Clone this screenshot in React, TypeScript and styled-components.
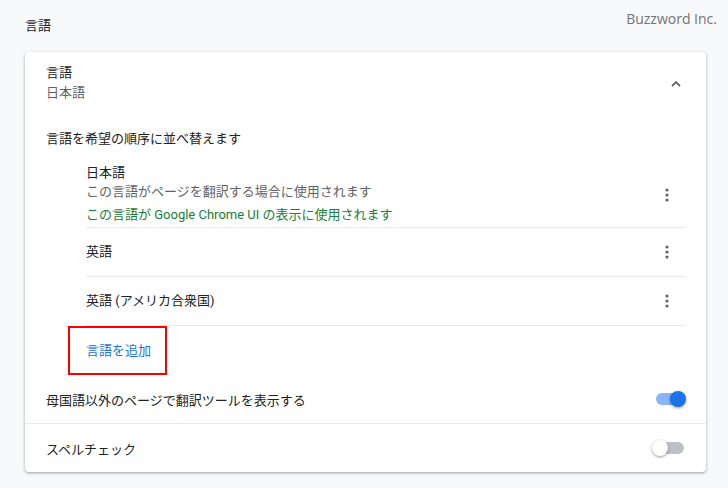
import React, {FC} from 'react';
import styled, {createGlobalStyle} from 'styled-components';

const GlobalStyle = createGlobalStyle`
  body {
    margin: 0;
    background: #f8f9fa;
    font-family: Roboto, "Noto Sans CJK JP", sans-serif;
    color: #202124;
    font-size: 13px;
  }
`

type Lang = {
    name: string
    lines?: { text: string, green?: boolean }[]
}

const languages: Lang[] = [
    {
        name: '日本語',
        lines: [
            {text: 'この言語がページを翻訳する場合に使用されます'},
            {text: 'この言語が Google Chrome UI の表示に使用されます', green: true},
        ]
    },
    {name: '英語'},
    {name: '英語 (アメリカ合衆国)'},
]

const Dots: FC = () => (
    <MenuButton>
        <svg width="4" height="14" viewBox="0 0 4 14">
            <circle cx="2" cy="2" r="1.6" fill="#5f6368"/>
            <circle cx="2" cy="7" r="1.6" fill="#5f6368"/>
            <circle cx="2" cy="12" r="1.6" fill="#5f6368"/>
        </svg>
    </MenuButton>
)

const App: FC = () => {
    return (
        <Page>
            <GlobalStyle/>
            <TopBar>
                <PageTitle>言語</PageTitle>
                <Brand>Buzzword Inc.</Brand>
            </TopBar>
            <Card>
                <CardHeader>
                    <div>
                        <HeaderTitle>言語</HeaderTitle>
                        <HeaderSub>日本語</HeaderSub>
                    </div>
                    <Chevron>
                        <svg width="10" height="6" viewBox="0 0 10 6">
                            <path d="M1 5 L5 1.2 L9 5" fill="none" stroke="#5f6368" strokeWidth="1.8"/>
                        </svg>
                    </Chevron>
                </CardHeader>
                <SectionLabel>言語を希望の順序に並べ替えます</SectionLabel>
                <LangList>
                    {languages.map((lang) => (
                        <LangRow key={lang.name} $tall={!!lang.lines}>
                            <div>
                                <LangName>{lang.name}</LangName>
                                {lang.lines && lang.lines.map((l) => (
                                    <LangNote key={l.text} $green={l.green}>{l.text}</LangNote>
                                ))}
                            </div>
                            <Dots/>
                        </LangRow>
                    ))}
                    <AddRow>
                        <Highlight>
                            <AddLink>言語を追加</AddLink>
                        </Highlight>
                    </AddRow>
                </LangList>
                <SettingRow>
                    <span>母国語以外のページで翻訳ツールを表示する</span>
                    <Toggle $on={true}><Knob $on={true}/></Toggle>
                </SettingRow>
                <SettingRow $border>
                    <span>スペルチェック</span>
                    <Toggle $on={false}><Knob $on={false}/></Toggle>
                </SettingRow>
            </Card>
        </Page>
    );
};

export default App;


const Page = styled.div`
  width: 728px;
  height: 488px;
  padding: 0 22px 0 25px;
  box-sizing: border-box;
`
const TopBar = styled.div`
  display: flex;
  justify-content: space-between;
  height: 52px;
`
const PageTitle = styled.h1`
  margin: 0;
  padding-top: 16px;
  font-size: 13px;
  font-weight: 400;
  line-height: 20px;
`
const Brand = styled.div`
  padding-top: 8px;
  margin-right: -11px;
  font-family: "Open Sans", sans-serif;
  font-size: 14px;
  line-height: 22px;
  color: #737373;
`
const Card = styled.div`
  background: #fff;
  border-radius: 4px;
  box-shadow: 0 1px 2px rgba(60, 64, 67, 0.3), 0 1px 3px 1px rgba(60, 64, 67, 0.15);
  overflow: hidden;
`
const CardHeader = styled.div`
  display: flex;
  justify-content: space-between;
  align-items: flex-start;
  padding: 11px 20px 0 21px;
  height: 65px;
  box-sizing: border-box;
`
const HeaderTitle = styled.div`
  line-height: 20px;
`
const HeaderSub = styled.div`
  line-height: 20px;
  color: #5f6368;
`
const Chevron = styled.div`
  width: 20px;
  display: flex;
  justify-content: center;
  margin-top: 18px;
`
const SectionLabel = styled.div`
  padding: 12px 21px 13px;
  line-height: 20px;
`
const LangList = styled.div`
  padding: 0 20px 0 61px;
`
const LangRow = styled.div<{ $tall?: boolean }>`
  display: flex;
  justify-content: space-between;
  align-items: center;
  min-height: ${p => p.$tall ? '66px' : '49px'};
  border-bottom: 1px solid #e8eaed;
  padding: ${p => p.$tall ? '1px 0 0' : '0'};
  box-sizing: border-box;
`
const LangName = styled.div`
  line-height: 20px;
`
const LangNote = styled.div<{ $green?: boolean }>`
  line-height: ${p => p.$green ? '24px' : '18px'};
  color: ${p => p.$green ? '#188038' : '#5f6368'};
  padding-top: ${p => p.$green ? '2px' : '0'};
`
const MenuButton = styled.button`
  width: 36px;
  height: 36px;
  border: none;
  background: none;
  padding: 0;
  margin-right: 1px;
  display: flex;
  align-items: center;
  justify-content: center;
`
const AddRow = styled.div`
  display: flex;
  margin-left: -18px;
`
const Highlight = styled.div`
  border: 2px solid #ff0000;
  padding: 0 14px 0 16px;
  height: 49px;
  box-sizing: border-box;
  display: flex;
  align-items: center;
`
const AddLink = styled.span`
  color: #1a73e8;
  line-height: 20px;
`
const SettingRow = styled.div<{ $border?: boolean }>`
  display: flex;
  justify-content: space-between;
  align-items: center;
  height: 48px;
  padding: 0 22px 0 21px;
  border-top: ${p => p.$border ? '1px solid #e8eaed' : 'none'};
`
const Toggle = styled.div<{ $on: boolean }>`
  position: relative;
  width: 28px;
  height: 12px;
  border-radius: 6px;
  background: ${p => p.$on ? '#8ab4f8' : '#bdc1c6'};
`
const Knob = styled.div<{ $on: boolean }>`
  position: absolute;
  top: -2px;
  left: ${p => p.$on ? '14px' : '-4px'};
  width: 16px;
  height: 16px;
  border-radius: 50%;
  background: ${p => p.$on ? '#1a73e8' : '#fff'};
  box-shadow: 0 1px 3px rgba(0, 0, 0, 0.4);
`
